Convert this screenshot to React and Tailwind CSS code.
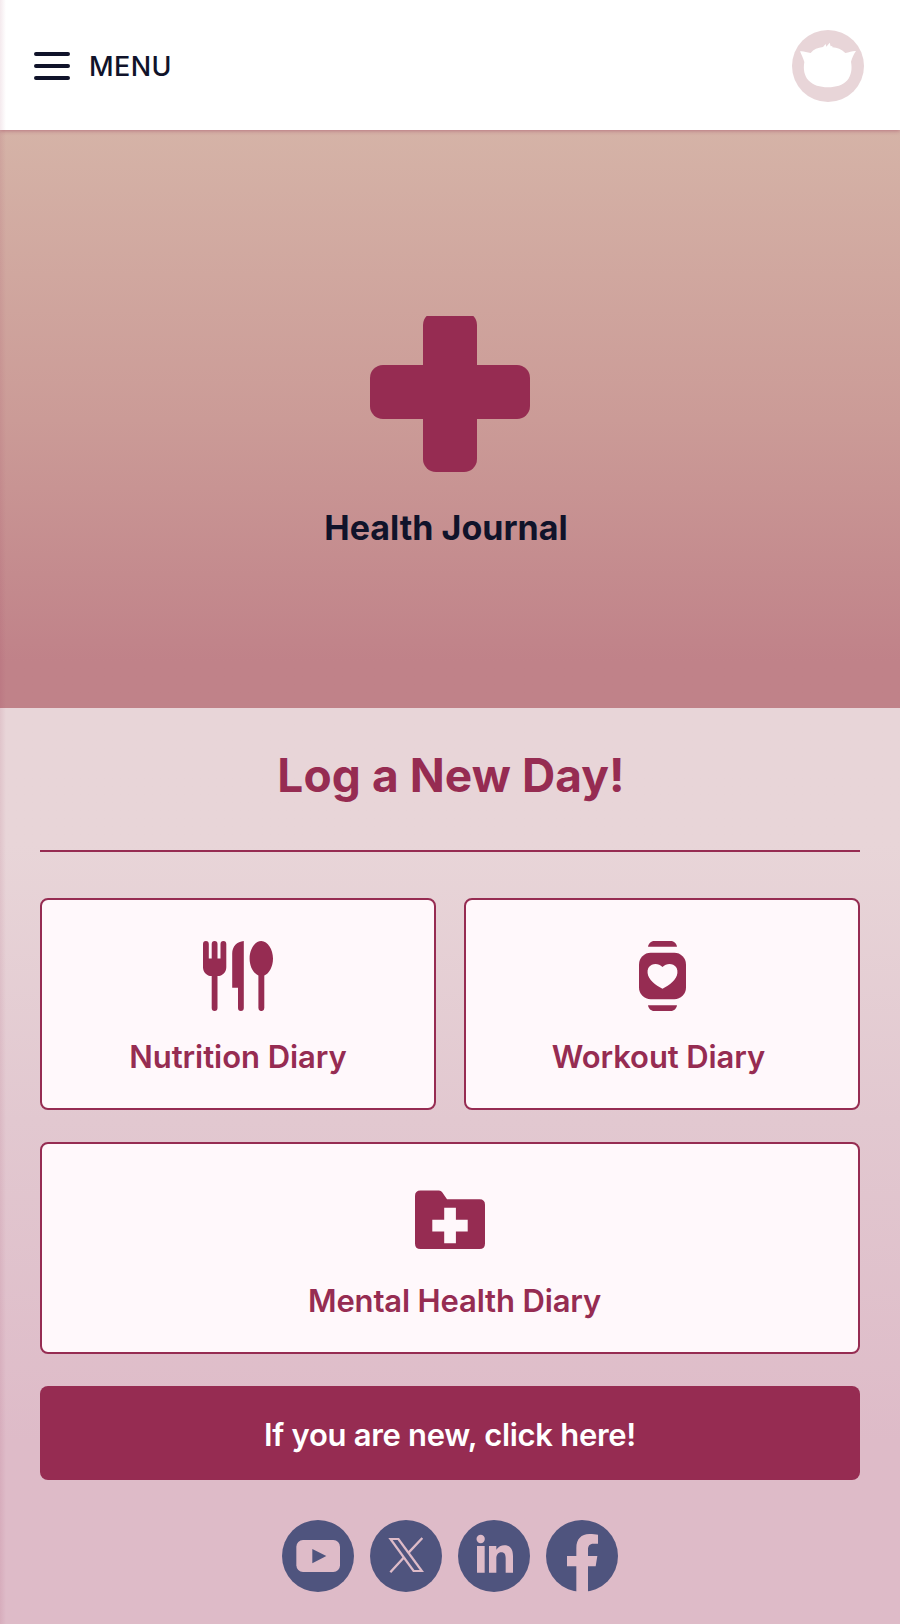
import React from 'react';

const MenuIcon = () => (
  <svg className="w-9 h-7" viewBox="0 0 36 28" fill="none" stroke="#10132a" strokeWidth="4" strokeLinecap="round">
    <path d="M2 2h32M2 14h32M2 26h32" />
  </svg>
);

const Avatar = () => (
  <svg className="w-[72px] h-[72px]" viewBox="0 0 216 216">
    <circle cx="108" cy="108" r="108" fill="#e8d5d8" />
    <path
      d="M24 64C34 62 43 67 56 69C65 58 77 53 93 51L101 42L103 50L113 38L116 49L121 48L121 52C136 53 148 58 160 69C172 67 182 62 192 63C185 73 180 84 177 95C181 117 178 135 166 151C152 166 132 172 108 172C83 172 64 166 49 151C37 136 33 119 37 96C33 84 29 75 24 64Z"
      fill="#fff"
    />
  </svg>
);

const CrossIcon = () => (
  <svg className="w-40 h-[156px]" viewBox="0 4 160 156" fill="#962c52">
    <rect x="53" y="0" width="54" height="160" rx="13" />
    <rect x="0" y="53" width="160" height="54" rx="13" />
  </svg>
);

const UtensilsIcon = () => (
  <svg className="w-[70px] h-[70px]" viewBox="0 0 70 70" fill="#962c52">
    <path d="M0 2.900a2.900 2.900 0 015.800 0v14.600h2.900V2.900a2.900 2.900 0 015.800 0v14.600h3V2.900a2.900 2.900 0 015.800 0v23.300c0 5-3.800 8.800-8.800 8.800v32.100a2.900 2.900 0 01-5.800 0V35C3.800 35 0 31.200 0 26.200z" />
    <path d="M40.800 0v67.100a2.900 2.900 0 01-5.800 0V46.700h-5.800V12.500C29.200 5.500 34 .5 40.800 0z" />
    <path d="M58.300 0C64.800 0 70 8.500 70 17.500c0 8-3.700 15-8.700 17v32.600a2.900 2.900 0 01-5.900 0V34.500c-5-2-8.800-9-8.800-17C46.600 8.500 51.900 0 58.300 0z" />
  </svg>
);

const WatchIcon = () => (
  <svg className="w-[47px] h-[70px]" viewBox="0 0 47 70">
    <g fill="#962c52">
      <path d="M9 5.800C9.500 2.500 12 0 15.200 0h16.600C35 0 37.500 2.500 38 5.800z" />
      <rect y="11.700" width="47" height="46.600" rx="11.700" />
      <path d="M9 64.200h29c-.5 3.300-3 5.800-6.200 5.800H15.200C12 70 9.500 67.500 9 64.200z" />
    </g>
    <path
      d="M23.500 26C20.500 22.800 16 22.300 12.800 23.800C9.500 25.300 8.200 28.500 8.600 32C9.200 38.800 16.500 44.200 23.500 47.800C30.500 44.200 37.800 38.800 38.400 32C38.800 28.500 37.500 25.300 34.200 23.800C31 22.300 26.500 22.800 23.500 26Z"
      fill="#fff8fb"
    />
  </svg>
);

const FolderIcon = () => (
  <svg className="w-[70px] h-[70px]" viewBox="0 -5.500 70 70">
    <path
      d="M5.500 0H24Q26 0 27 1.500L32 8.800H64.500Q70 8.800 70 14.300V53Q70 58.500 64.500 58.500H5.500Q0 58.500 0 53V5.500Q0 0 5.500 0Z"
      fill="#962c52"
    />
    <path d="M29.200 17.300h11.700v12h11.800v11.700H40.900v11.700H29.200V41H17.300V29.300h11.900z" fill="#fff8fb" />
  </svg>
);

const socials = [
  {
    name: 'YouTube',
    drawing: (
      <>
        <rect x="43" y="60" width="131" height="96" rx="20" fill="#debbc8" />
        <path d="M91 87L133 108L91 130Z" fill="#4f547e" />
      </>
    ),
  },
  {
    name: 'X',
    drawing: (
      <>
        <path d="M61 157L103 111M157 54L113 101" stroke="#debbc8" strokeWidth="7" fill="none" />
        <path d="M55 54H87L162 156H129Z" fill="#debbc8" />
        <path d="M68 60H83L149 150H133Z" fill="#4f547e" />
      </>
    ),
  },
  {
    name: 'LinkedIn',
    drawing: (
      <g fill="#debbc8">
        <circle cx="68" cy="57" r="12.500" />
        <path d="M57 78H80V158H57ZM93 78H115V89C121 80 130 76 139 76C158 76 165 88 165 109V158H143V115C143 103 139 97 130 97C120 97 115 105 115 116V158H93Z" />
      </g>
    ),
  },
  {
    name: 'Facebook',
    drawing: (
      <path
        d="M91 217V139H63V108H91V84C91 57 106 42 130 42C141 42 149 43 156 44V71H143C130 71 126 78 126 88V108H154L149 139H126V217Z"
        fill="#debbc8"
      />
    ),
  },
];

const DiaryCard = ({ icon, label, labelClass }) => (
  <button className="flex h-[212px] w-full flex-col items-center rounded-lg border-2 border-[#962c52] bg-[#fff8fb] pt-[41px]">
    {icon}
    <span className={`mt-[26px] whitespace-nowrap text-[31px] leading-[40px] font-semibold text-[#962c52] ${labelClass}`}>
      {label}
    </span>
  </button>
);

const App = () => {
  return (
    <div className="relative flex h-[1624px] w-[900px] flex-col overflow-hidden bg-[#debbc8] font-['Inter',sans-serif]">
      {/* Header */}
      <header className="z-10 flex h-[130px] shrink-0 items-center justify-between bg-white pr-9 pl-[34px] pb-px pt-[3px] shadow-[0_1px_4px_rgba(150,44,82,0.45)]">
        <button className="flex items-center gap-[18px]">
          <MenuIcon />
          <span className="pt-0.5 pl-px text-[27px] leading-8 font-medium tracking-[0.4px] text-[#10132a]">MENU</span>
        </button>
        <Avatar />
      </header>

      {/* Hero */}
      <section className="flex h-[578px] shrink-0 flex-col items-center bg-linear-to-b from-[#d5b3a7] via-[#cb9b97] via-50% to-[#c08289] to-92% pt-[186px]">
        <CrossIcon />
        <h1 className="mt-[34px] mr-2 whitespace-nowrap text-[34px] leading-[44px] font-bold text-[#10132a]">
          Health Journal
        </h1>
      </section>

      {/* Diary links */}
      <main className="flex grow flex-col bg-linear-to-b from-[#e8d5d8] from-15% via-[#e2c8d0] via-45% to-[#debbc8] to-80% px-10">
        <h2 className="flex h-[142px] items-center justify-center whitespace-nowrap pb-[7px] pl-0.5 text-[46px] font-bold tracking-[0.1px] text-[#962c52]">
          Log a New Day!
        </h2>
        <div className="h-0.5 shrink-0 bg-[#962c52]" />

        <div className="mt-[46px] grid grid-cols-2 gap-x-7 gap-y-8">
          <DiaryCard icon={<UtensilsIcon />} label="Nutrition Diary" labelClass="tracking-[-0.05px]" />
          <DiaryCard icon={<WatchIcon />} label="Workout Diary" labelClass="mr-[7px] tracking-[-0.1px]" />
          <div className="col-span-2">
            <DiaryCard icon={<FolderIcon />} label="Mental Health Diary" labelClass="ml-[9px] tracking-[-0.15px]" />
          </div>
        </div>

        <button className="mt-8 flex h-[94px] items-center justify-center rounded-lg bg-[#962c52] pt-1 whitespace-nowrap text-[31px] font-semibold tracking-[-0.3px] text-white">
          If you are new, click here!
        </button>

        <div className="mt-10 flex justify-center gap-4">
          {socials.map((social) => (
            <a key={social.name} href="#" title={social.name}>
              <svg className="size-[72px]" viewBox="0 0 216 216">
                <circle cx="108" cy="108" r="108" fill="#4f547e" />
                {social.drawing}
              </svg>
            </a>
          ))}
        </div>
      </main>

      {/* Edge shade */}
      <div className="pointer-events-none absolute inset-y-0 left-0 z-20 w-1.5 bg-linear-to-r from-[#962c52]/10 to-transparent" />
    </div>
  );
};

export default App;
